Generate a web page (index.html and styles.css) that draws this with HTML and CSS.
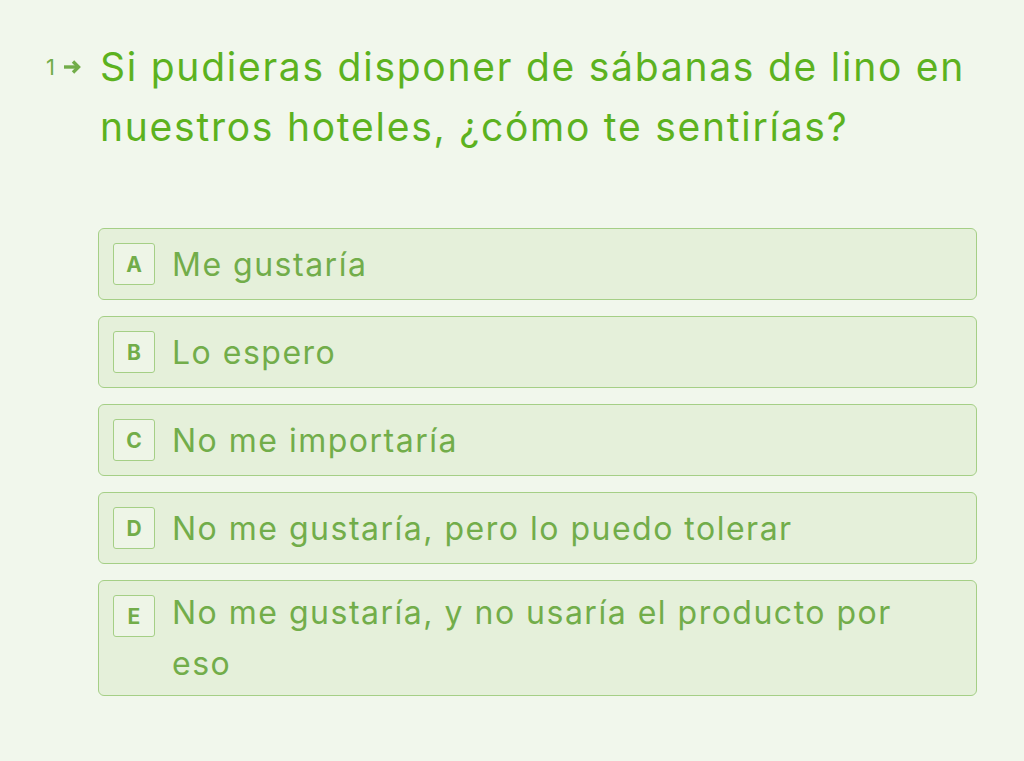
FILE: index.html
```html
<!DOCTYPE html>
<html lang="es">
<head>
<meta charset="utf-8">
<title>Pregunta</title>
<link rel="stylesheet" href="styles.css">
</head>
<body>
<main class="page">
  <section class="question">
    <div class="qnum">
      <span class="num">1</span>
      <svg class="arrow" width="18" height="14" viewBox="0 0 18 14" aria-hidden="true">
        <path d="M1 7 H15" stroke="currentColor" stroke-width="3.4" fill="none"/>
        <path d="M10 1.5 L15.5 7 L10 12.5" stroke="currentColor" stroke-width="3.4" fill="none" stroke-linejoin="miter"/>
      </svg>
    </div>
    <div class="qbody">
      <h1 class="title">Si pudieras disponer de sábanas de lino en nuestros hoteles, ¿cómo te sentirías?</h1>
      <ul class="options">
        <li class="option"><span class="key">A</span><span class="label">Me gustaría</span></li>
        <li class="option"><span class="key">B</span><span class="label">Lo espero</span></li>
        <li class="option"><span class="key">C</span><span class="label">No me importaría</span></li>
        <li class="option"><span class="key">D</span><span class="label">No me gustaría, pero lo puedo tolerar</span></li>
        <li class="option"><span class="key">E</span><span class="label">No me gustaría, y no usaría el producto por eso</span></li>
      </ul>
    </div>
  </section>
</main>
</body>
</html>
```

FILE: styles.css
```css
html, body {
  margin: 0;
  padding: 0;
  background: #f1f7ec;
}
body {
  font-family: Inter, "Open Sans", sans-serif;
  color: #72ad4a;
}
.page {
  padding: 37px 47px 0 47px;
}
.question {
  display: flex;
  align-items: flex-start;
}
.qnum {
  width: 53px;
  height: 60px;
  display: flex;
  align-items: center;
  gap: 8px;
  color: #72ad4a;
  flex: none;
}
.num {
  font-size: 22px;
  font-weight: 400;
  line-height: 1;
  margin-left: -1px;
}
.arrow {
  display: block;
}
.qbody {
  flex: 1;
}
.title {
  margin: 0;
  font-size: 39px;
  line-height: 60px;
  font-weight: 400;
  color: #5cb21f;
  letter-spacing: 1.75px;
}
.options {
  list-style: none;
  margin: 71px 0 0 -2px;
  padding: 0;
  display: flex;
  flex-direction: column;
  gap: 16px;
}
.option {
  display: flex;
  align-items: center;
  gap: 17px;
  min-height: 72px;
  box-sizing: border-box;
  padding: 6px 55px 6px 14px;
  background: #e5f0da;
  border: 1px solid #a5cf86;
  border-radius: 6px;
}
.key {
  flex: none;
  align-self: flex-start;
  width: 42px;
  height: 42px;
  margin-top: 8px;
  box-sizing: border-box;
  border: 1px solid #a5cf86;
  border-radius: 3px;
  background: #eef5e7;
  display: flex;
  align-items: center;
  justify-content: center;
  font-size: 21px;
  font-weight: 700;
  color: #72ad4a;
}
.label {
  font-size: 32px;
  line-height: 51px;
  letter-spacing: 1.5px;
  color: #72ad4a;
}
```
